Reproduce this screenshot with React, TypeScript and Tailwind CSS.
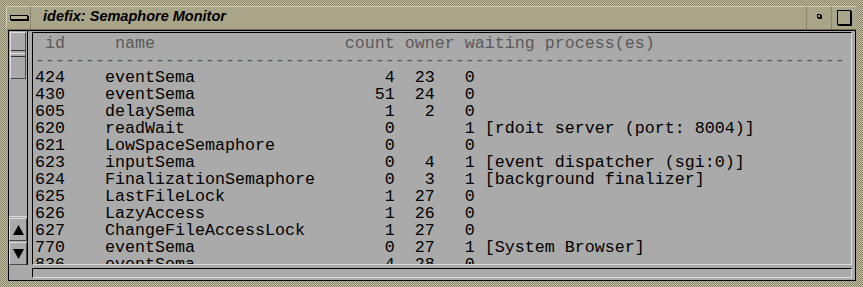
import React from "react";

const rows: [string, string, string, string, string, string][] = [
  ["424", "eventSema", "4", "23", "0", ""],
  ["430", "eventSema", "51", "24", "0", ""],
  ["605", "delaySema", "1", "2", "0", ""],
  ["620", "readWait", "0", "", "1", "[rdoit server (port: 8004)]"],
  ["621", "LowSpaceSemaphore", "0", "", "0", ""],
  ["623", "inputSema", "0", "4", "1", "[event dispatcher (sgi:0)]"],
  ["624", "FinalizationSemaphore", "0", "3", "1", "[background finalizer]"],
  ["625", "LastFileLock", "1", "27", "0", ""],
  ["626", "LazyAccess", "1", "26", "0", ""],
  ["627", "ChangeFileAccessLock", "1", "27", "0", ""],
  ["770", "eventSema", "0", "27", "1", "[System Browser]"],
  ["836", "eventSema", "4", "28", "0", ""],
];

const header = " id     name".padEnd(31) + "count owner waiting process(es)";
const dashes = "-".repeat(81);

function line(r: [string, string, string, string, string, string]) {
  return (
    r[0].padEnd(7) +
    r[1].padEnd(24) +
    r[2].padStart(5) +
    r[3].padStart(4) +
    "   " +
    r[4] +
    (r[5] ? " " + r[5] : "")
  );
}

export default function App() {
  return (
    <div className="w-[863px] h-[287px] bg-[repeating-conic-gradient(#bcb89c_0%_25%,#8f8b72_0%_50%)] bg-[length:2px_2px] pt-[6px] pl-[6px] pr-[7px] pb-[6px] flex flex-col overflow-hidden">
      {/* title bar */}
      <div className="h-[24px] flex bg-[#a9a588] border-t border-l border-t-[#d0ccb2] border-l-[#d0ccb2] border-b border-b-[#6e6b55]">
        <div className="w-[24px] h-full flex items-center justify-center border-r border-dotted border-r-[#6e6b55]">
          <div className="w-[18px] h-[5px] bg-[#b5b196] border border-black shadow-[1px_1px_0_#000] -mt-[2px]" />
        </div>
        <div className="flex-1 flex items-center pl-[12px] border-r border-dotted border-r-[#6e6b55]">
          <span className="italic font-bold text-[14.5px] text-black font-['Liberation_Sans',sans-serif] leading-none -mt-[4px]">
            idefix: Semaphore Monitor
          </span>
        </div>
        <div className="w-[25px] h-full flex items-center justify-center border-r border-dotted border-r-[#6e6b55]">
          <div className="w-[4px] h-[4px] border border-black shadow-[1px_1px_0_#000] -mt-[4px]" />
        </div>
        <div className="w-[24px] h-full flex items-center justify-center">
          <div className="w-[14px] h-[15px] border border-black shadow-[1px_1px_0_#000] -mt-[2px] -ml-[1px]" />
        </div>
      </div>
      {/* client area */}
      <div className="flex-1 ml-[2px] bg-[#aaaaaa] border border-black flex flex-col">
        <div className="flex gap-[4px] h-[234px]">
          {/* scrollbar */}
          <div className="w-[19px] flex flex-col border-r border-r-black pt-[1px]">
            <div className="flex-1 pl-[1px] pr-[1px]">
              <div className="h-[47px] bg-[#aaaaaa] border border-t-[#dcdcdc] border-l-[#dcdcdc] border-r-[#4a4a4a] border-b-[#4a4a4a] flex flex-col justify-center items-stretch gap-[2px] pb-[4px]">
                <div className="h-[1px] bg-[#333]" />
                <div className="h-[1px] bg-[#e0e0e0]" />
                <div className="h-[1px] bg-[#333]" />
              </div>
            </div>
            <div className="h-[1px] bg-[#dcdcdc]" />
            <div className="h-[23px] mt-[1px] bg-[#aaaaaa] border border-t-[#dcdcdc] border-l-[#dcdcdc] border-r-[#4a4a4a] border-b-[#4a4a4a] flex items-center justify-center">
              <svg width="11" height="10" viewBox="0 0 11 10">
                <polygon points="5.5,0 11,10 0,10" fill="#000" />
              </svg>
            </div>
            <div className="h-[23px] mt-[1px] bg-[#aaaaaa] border border-t-[#dcdcdc] border-l-[#dcdcdc] border-r-[#4a4a4a] border-b-[#4a4a4a] flex items-center justify-center">
              <svg width="11" height="10" viewBox="0 0 11 10">
                <polygon points="0,0 11,0 5.5,10" fill="#000" />
              </svg>
            </div>
          </div>
          {/* text area */}
          <div className="flex-1 mr-[3px] mt-[1px] border-t border-l border-t-black border-l-black border-r border-b border-r-[#dcdcdc] border-b-[#dcdcdc] overflow-hidden pl-[2px] pt-[2px]">
            <pre className="font-['Liberation_Mono',monospace] text-[16.667px] leading-[17px] text-black m-0">
              <div className="text-[#5a5a5a]">{header}</div>
              <div className="text-[#5a5a5a]">{dashes}</div>
              {rows.map((r) => (
                <div key={r[0]}>{line(r)}</div>
              ))}
            </pre>
          </div>
        </div>
        <div className="flex mt-[3px]">
          <div className="ml-[23px] mr-[3px] flex-1 h-[10px] border-t border-l border-t-black border-l-black border-r border-b border-r-[#dcdcdc] border-b-[#dcdcdc]" />
        </div>
      </div>
    </div>
  );
}
